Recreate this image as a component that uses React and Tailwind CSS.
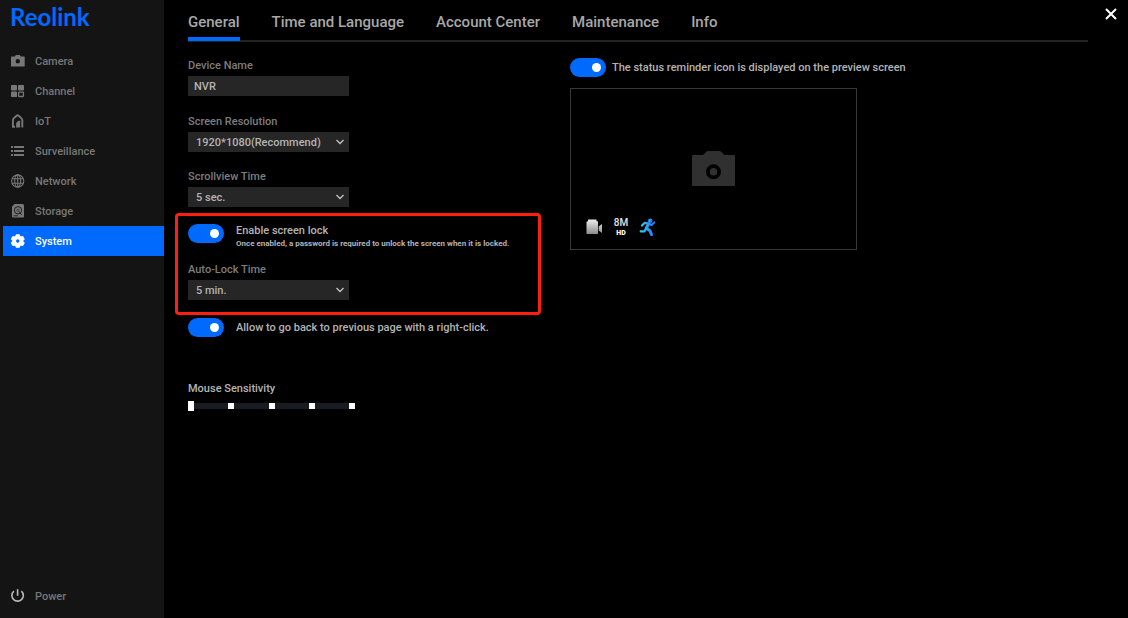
import React, { useState } from 'react';

function CameraIcon({ className }) {
  return (
    <svg viewBox="0 0 43 36" className={className} aria-hidden="true">
      <path
        fill="currentColor"
        fillRule="evenodd"
        d="M1 4h10l3.600-3.500Q15.200 0 16 0h11.500q.8 0 1.400.5L32.500 4H42q1 0 1 1v29q0 1-1 1H1q-1 0-1-1V5q0-1 1-1ZM21.500 13.200a7.500 7.500 0 1 0 0 15 7.500 7.500 0 0 0 0-15Z"
      />
      <circle cx="21.500" cy="20.700" r="3.800" fill="currentColor" />
    </svg>
  );
}

function SmallCameraIcon() {
  return (
    <svg viewBox="0 0 14 14" className="size-3.5" aria-hidden="true">
      <path
        fill="currentColor"
        fillRule="evenodd"
        d="M.5 2.500h3.300l1-1.500h4l1 1.500h3.400q.5 0 .5.500v9q0 .5-.5.500H.5q-.5 0-.5-.500V3Q0 2.500.5 2.500ZM6.800 5a2.200 2.200 0 1 0 0 4.400 2.200 2.200 0 0 0 0-4.400Z"
      />
    </svg>
  );
}

function ChannelIcon() {
  return (
    <svg viewBox="0 0 14 14" className="size-3.5" fill="currentColor" aria-hidden="true">
      <rect x="0" y="1" width="6" height="5.500" rx="0.800" />
      <rect x="7" y="1" width="6" height="5.500" rx="0.800" />
      <rect x="0" y="7.500" width="6" height="5.500" rx="0.800" />
      <rect x="7.600" y="8.100" width="4.800" height="4.400" rx="0.500" fill="none" stroke="currentColor" strokeWidth="1.300" />
    </svg>
  );
}

function IotIcon() {
  return (
    <svg viewBox="0 0 14 14" className="size-3.5" aria-hidden="true">
      <path
        d="M4 12.700H1.900V6.200Q1.900 5 2.900 4.100L5.600 1.700q1-.8 2 0l2.700 2.400q1 .9 1 2.100v7.300"
        fill="none"
        stroke="currentColor"
        strokeWidth="1.900"
      />
      <path d="M5.100 13.500V10q0-3 4-3.500v7Z" fill="currentColor" />
    </svg>
  );
}

function SurveillanceIcon() {
  return (
    <svg viewBox="0 0 14 14" className="size-3.5" fill="currentColor" aria-hidden="true">
      {[2, 6, 10].map((y) => (
        <g key={y}>
          <rect x="0" y={y} width="2" height="2" />
          <rect x="3" y={y} width="10" height="2" />
        </g>
      ))}
    </svg>
  );
}

function NetworkIcon() {
  return (
    <svg viewBox="0 0 14 14" className="size-3.5" fill="none" stroke="currentColor" strokeWidth="1.100" aria-hidden="true">
      <circle cx="6.700" cy="7" r="6.100" />
      <ellipse cx="6.700" cy="7" rx="3" ry="6.100" />
      <path d="M6.700 .9v12.200M1 4.700h11.400M1 9.300h11.400" />
    </svg>
  );
}

function StorageIcon() {
  return (
    <svg viewBox="0 0 14 14" className="size-3.5" aria-hidden="true">
      <path
        fill="currentColor"
        d="M3.500 0h8q1.500 0 1.500 1.500v11q0 1-1 1H2q-1 0-1-1v-10Z"
      />
      <circle cx="7" cy="6.300" r="3.700" fill="none" stroke="#141414" strokeWidth="0.900" />
      <circle cx="7" cy="6.300" r="1.200" fill="none" stroke="#141414" strokeWidth="0.500" />
      <path d="m8 7.500 2.800 3.700M2.500 11.800h4.500" stroke="#141414" strokeWidth="0.800" />
    </svg>
  );
}

function SystemIcon() {
  return (
    <svg viewBox="0 0 14 14" className="size-3.5" aria-hidden="true">
      <path
        fill="currentColor"
        stroke="currentColor"
        strokeWidth="1.200"
        strokeLinejoin="round"
        fillRule="evenodd"
        d="M5.300.8h3l.5 1.700 1 .6 1.800-.5 1.500 2.500-1.300 1.300v1.200l1.300 1.300-1.500 2.500-1.800-.5-1 .6-.5 1.700h-3L4.800 11.500l-1-.6-1.800.5L.5 8.900 1.800 7.600V6.400L.5 5.100 2 2.600l1.800.5 1-.6ZM6.800 4.700a2.300 2.300 0 1 0 0 4.600 2.300 2.300 0 0 0 0-4.600Z"
      />
    </svg>
  );
}

function PowerIcon() {
  return (
    <svg viewBox="0 0 14 14" className="size-3.5 text-[#b8b8b8]" fill="none" stroke="currentColor" strokeWidth="1.600" aria-hidden="true">
      <path d="M6.600 0.300v6.500M2.900 2.100a5.700 5.700 0 1 0 7.400 0" />
    </svg>
  );
}

const NAV = [
  { label: 'Camera', Icon: SmallCameraIcon },
  { label: 'Channel', Icon: ChannelIcon },
  { label: 'IoT', Icon: IotIcon },
  { label: 'Surveillance', Icon: SurveillanceIcon },
  { label: 'Network', Icon: NetworkIcon },
  { label: 'Storage', Icon: StorageIcon },
  { label: 'System', Icon: SystemIcon },
];

const TABS = ['General', 'Time and Language', 'Account Center', 'Maintenance', 'Info'];

function NavItem({ label, Icon, active }) {
  return (
    <a
      href="#"
      aria-current={active ? 'page' : undefined}
      className={
        'ml-[3px] flex h-[30px] items-center gap-2.5 pl-2 ' +
        (active ? 'bg-[#006aff] text-white' : 'text-[#777777]')
      }
    >
      <Icon />
      <span className="pt-0.5">{label}</span>
    </a>
  );
}

function Switch({ id }) {
  return (
    <input
      id={id}
      type="checkbox"
      role="switch"
      defaultChecked
      className="flex h-[19px] w-9 shrink-0 appearance-none items-center rounded-full bg-[#444444] px-[5px] before:size-[9px] before:rounded-full before:bg-white checked:justify-end checked:bg-[#006aff]"
    />
  );
}

function SelectField({ id, label, options }) {
  return (
    <div className="flex w-[161px] flex-col gap-0.5">
      <label htmlFor={id} className="leading-4 text-[#7d7d7d]">
        {label}
      </label>
      <div className="relative">
        <select
          id={id}
          className="block h-5 w-full appearance-none bg-[#262626] pt-0.5 pr-5 pl-2 leading-[18px] text-[#b4b4b4]"
        >
          {options.map((o) => (
            <option key={o}>{o}</option>
          ))}
        </select>
        <svg
          viewBox="0 0 10 10"
          className="pointer-events-none absolute top-[5px] right-1 size-2.5"
          fill="none"
          stroke="#c4c4c4"
          strokeWidth="1.300"
          aria-hidden="true"
        >
          <path d="m1.500 3 3.500 3.500L8.500 3" />
        </svg>
      </div>
    </div>
  );
}

function Preview() {
  return (
    <div className="flex h-[162px] w-[287px] flex-col justify-between border border-[#383838]">
      <div className="flex justify-center pt-[62px]">
        <CameraIcon className="h-9 w-[43px] text-[#303030]" />
      </div>
      <div className="flex items-center gap-2.5 pb-3 pl-[15px]">
        <svg viewBox="0 0 17 18" className="h-[18px] w-[17px]" aria-label="Recording" role="img">
          <defs>
            <linearGradient id="rec" x1="0" y1="0" x2="0" y2="1">
              <stop offset="0" stopColor="#eeeeee" />
              <stop offset="1" stopColor="#8c8c8c" />
            </linearGradient>
          </defs>
          <path
            fill="url(#rec)"
            d="M2 1.500h8.500v1.800H12v12.200q0 .5-.5.500H1q-.5 0-.5-.500V4Q.5 3.300 2 3.300ZM12.700 8.500 16 6v9l-3.300-2.500Z"
          />
        </svg>
        <div className="flex w-4 flex-col items-center text-[#e4e4e4]">
          <span className="text-[10px] leading-3">8M</span>
          <span className="text-[7px] leading-2 font-black text-white">HD</span>
        </div>
        <svg viewBox="0 0 17 18" className="h-[18px] w-[17px]" aria-label="Motion" role="img">
          <defs>
            <linearGradient id="run" gradientUnits="userSpaceOnUse" x1="1" y1="0" x2="15" y2="0">
              <stop offset="0" stopColor="#2ad4e8" />
              <stop offset="1" stopColor="#2b74ff" />
            </linearGradient>
          </defs>
          <circle cx="11.200" cy="2.700" r="2.200" fill="url(#run)" />
          <g fill="none" stroke="url(#run)" strokeWidth="2.200" strokeLinecap="round" strokeLinejoin="round">
            <path d="M3 7.500 5.500 4.900 10 5.700l2.500 1.300L15.300 4.500" />
            <path d="M9.500 6 7.300 10.300l3.700 2.500 1.500 3.700" strokeWidth="3" />
            <path d="M7 10.500 5.500 13.300H1.700" />
          </g>
        </svg>
      </div>
    </div>
  );
}

export default function App() {
  const [tab, setTab] = useState('General');
  return (
    <div className="flex min-h-screen bg-black font-[Roboto,sans-serif] text-[11px] font-medium">
      <aside className="flex w-[164px] shrink-0 flex-col bg-[#141414] pb-[7px]">
        <div className="flex h-[46px] items-start pt-[5px] pl-2.5 font-[Lato,sans-serif] text-[24px] leading-6 font-bold text-[#006aff]">
          Reolink
        </div>
        <nav className="flex flex-col">
          {NAV.map((n) => (
            <NavItem key={n.label} {...n} active={n.label === 'System'} />
          ))}
        </nav>
        <div className="mt-auto">
          <NavItem label="Power" Icon={PowerIcon} />
        </div>
      </aside>

      <main className="flex-1 pl-6">
        <div role="tablist" className="flex h-[42px] gap-8 border-b-2 border-[#222222] text-[15px]">
          {TABS.map((t) => (
            <button
              key={t}
              type="button"
              role="tab"
              aria-selected={t === tab}
              onClick={() => setTab(t)}
              className={
                'h-[41px] border-b-4 pt-2 whitespace-nowrap text-[#a8a8a8] ' +
                (t === tab ? 'border-[#006aff]' : 'border-transparent')
              }
            >
              {t}
            </button>
          ))}
        </div>

        <div className="flex pt-4 text-[#b4b4b4]">
          <form className="w-[382px] shrink-0">
            <div className="flex w-[161px] flex-col gap-0.5">
              <label htmlFor="name" className="leading-4 text-[#7d7d7d]">
                Device Name
              </label>
              <input id="name" defaultValue="NVR" className="h-5 w-full bg-[#262626] px-1.5" />
            </div>

            <div className="mt-[18px] flex flex-col gap-[17px]">
              <SelectField
                id="resolution"
                label="Screen Resolution"
                options={['1920*1080(Recommend)', '1280*720']}
              />
              <SelectField id="scroll" label="Scrollview Time" options={['5 sec.', '10 sec.']} />
            </div>

            <section className="mt-1.5 -ml-[13px] flex w-[366px] flex-col gap-3 rounded-sm border-3 border-[#ff1e12] px-2.5 pt-2 pb-3">
              <div className="flex items-start gap-3">
                <Switch id="lock" />
                <label htmlFor="lock" className="flex flex-col">
                  <span className="leading-[14px]">Enable screen lock</span>
                  <span className="text-[8px] leading-3 font-bold whitespace-nowrap">
                    Once enabled, a password is required to unlock the screen when it is locked.
                  </span>
                </label>
              </div>
              <SelectField id="autolock" label="Auto-Lock Time" options={['5 min.', '10 min.']} />
            </section>

            <div className="mt-0.5 flex h-5 items-center gap-3">
              <Switch id="back" />
              <label htmlFor="back" className="pt-0.5">
                Allow to go back to previous page with a right-click.
              </label>
            </div>

            <div className="mt-11 flex w-[167px] flex-col gap-1">
              <label htmlFor="mouse" className="leading-4">
                Mouse Sensitivity
              </label>
              <div className="relative flex h-2.5 items-center">
                <div className="flex h-1.5 w-full justify-between bg-[#181b1f]">
                  {[0, 1, 2, 3, 4].map((i) => (
                    <span key={i} className="size-1.5 bg-white" />
                  ))}
                </div>
                <input
                  id="mouse"
                  type="range"
                  min="0"
                  max="4"
                  defaultValue="0"
                  className="absolute inset-0 h-2.5 w-full appearance-none bg-transparent [&::-webkit-slider-thumb]:h-2.5 [&::-webkit-slider-thumb]:w-1.5 [&::-webkit-slider-thumb]:appearance-none [&::-webkit-slider-thumb]:bg-white"
                />
              </div>
            </div>
          </form>

          <section className="flex flex-col gap-[11px]">
            <div className="flex items-center gap-1.5">
              <Switch id="status" />
              <label htmlFor="status" className="pt-0.5">
                The status reminder icon is displayed on the preview screen
              </label>
            </div>
            <Preview />
          </section>
        </div>
      </main>

      <div className="flex w-10 shrink-0 justify-center pt-2 pl-1.5">
        <button type="button" aria-label="Close" className="size-3">
          <svg viewBox="0 0 12 12" className="size-3" stroke="#ffffff" strokeWidth="2" aria-hidden="true">
            <path d="m1 1 10 10M11 1 1 11" />
          </svg>
        </button>
      </div>
    </div>
  );
}
